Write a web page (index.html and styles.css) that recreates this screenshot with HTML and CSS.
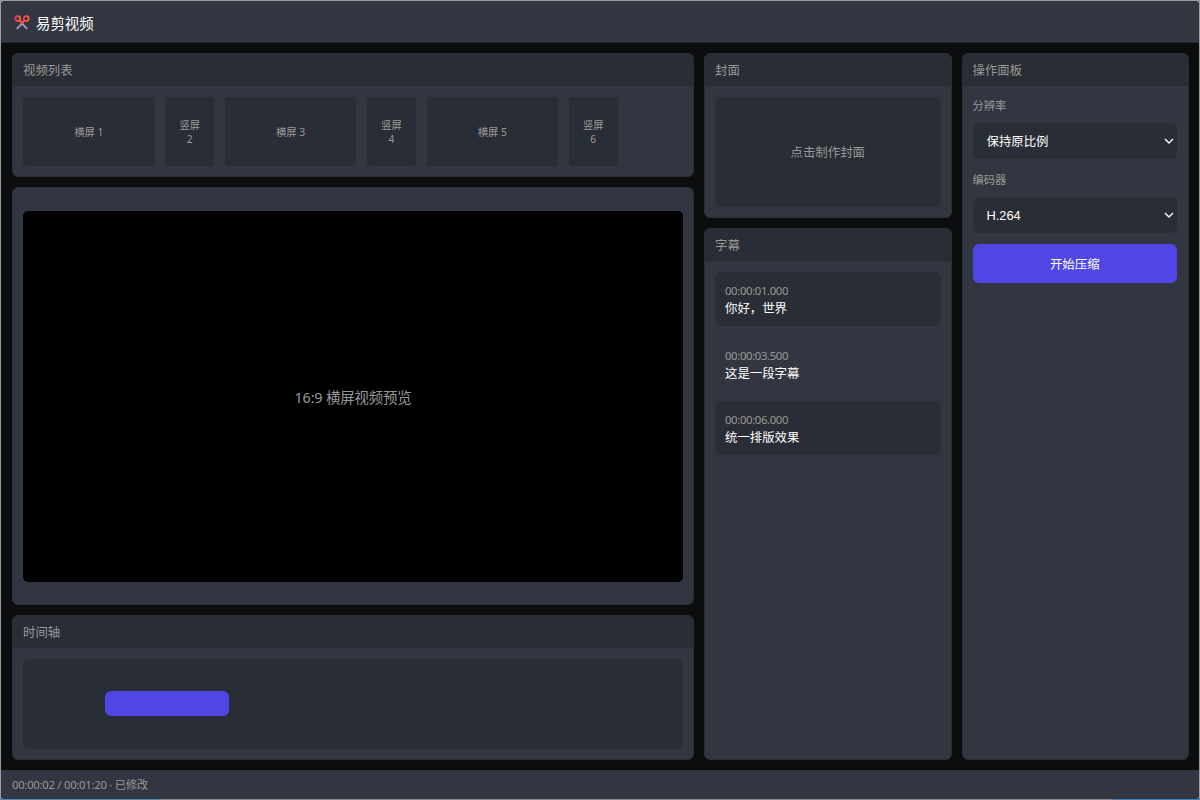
FILE: index.html
```
<!DOCTYPE html>
<html lang="zh-CN">
<head>
    <meta charset="UTF-8">
    <title>易剪视频</title>
    <link rel="stylesheet" href="styles.css">
</head>
<body>

<div class="app">
    <header class="topbar">
        <svg class="logo" viewBox="0 0 16 16" width="16" height="16" fill="none">
            <defs>
                <linearGradient id="ring" x1="0" y1="0" x2="1" y2="0">
                    <stop offset="0" stop-color="#f5316d"/>
                    <stop offset="1" stop-color="#ff6a2b"/>
                </linearGradient>
            </defs>
            <path d="M7 8.5 L13.2 14.8 M9 8.5 L2.8 14.8" stroke="#ac93c4" stroke-width="1.9"/>
            <path d="M5.5 6.3 L8 8.9 L10.5 6.3" stroke="#f8503f" stroke-width="2"/>
            <circle cx="3.8" cy="4.6" r="2.5" stroke="url(#ring)" stroke-width="1.7"/>
            <circle cx="12.2" cy="4.6" r="2.5" stroke="url(#ring)" stroke-width="1.7"/>
        </svg>
        <span class="title">易剪视频</span>
    </header>

    <main class="main">
        <div class="column">
            <section class="panel list-panel">
                <div class="panel-header">视频列表</div>
                <div class="video-list">
                    <div class="thumb">横屏 1</div>
                    <div class="thumb portrait">竖屏 2</div>
                    <div class="thumb">横屏 3</div>
                    <div class="thumb portrait">竖屏 4</div>
                    <div class="thumb">横屏 5</div>
                    <div class="thumb portrait">竖屏 6</div>
                </div>
            </section>
            <section class="panel preview-panel">
                <div class="preview">16:9 横屏视频预览</div>
            </section>
            <section class="panel timeline-panel">
                <div class="panel-header">时间轴</div>
                <div class="timeline">
                    <div class="clip"></div>
                </div>
            </section>
        </div>

        <div class="column">
            <section class="panel cover-panel">
                <div class="panel-header">封面</div>
                <div class="cover">点击制作封面</div>
            </section>
            <section class="panel subtitle-panel">
                <div class="panel-header">字幕</div>
                <div class="subtitles">
                    <div class="subtitle filled">
                        <div class="time">00:00:01.000</div>
                        <div class="text">你好，世界</div>
                    </div>
                    <div class="subtitle">
                        <div class="time">00:00:03.500</div>
                        <div class="text">这是一段字幕</div>
                    </div>
                    <div class="subtitle filled">
                        <div class="time">00:00:06.000</div>
                        <div class="text">统一排版效果</div>
                    </div>
                </div>
            </section>
        </div>

        <div class="column">
            <section class="panel action-panel">
                <div class="panel-header">操作面板</div>
                <div class="form">
                    <label for="ratio">分辨率</label>
                    <div class="select-box">
                        <select id="ratio">
                            <option>保持原比例</option>
                        </select>
                        <svg class="arrow" viewBox="0 0 10 6" width="10" height="6"><path d="M1 1 L5 5 L9 1"/></svg>
                    </div>
                    <label for="codec">编码器</label>
                    <div class="select-box">
                        <select id="codec">
                            <option>H.264</option>
                        </select>
                        <svg class="arrow" viewBox="0 0 10 6" width="10" height="6"><path d="M1 1 L5 5 L9 1"/></svg>
                    </div>
                    <button type="button">开始压缩</button>
                </div>
            </section>
        </div>
    </main>

    <footer class="statusbar">00:00:02 / 00:01:20 · 已修改</footer>
</div>

</body>
</html>
```
FILE: styles.css
```
* {
  box-sizing: border-box;
}
body {
  margin: 0;
  height: 800px;
  padding: 1px;
  overflow: hidden;
  font-family: "Noto Sans", "Noto Sans CJK SC", sans-serif;
  color: #fff;
  background: linear-gradient(to right, #5a8aae 0 161px, #85878b 161px 1112px, #4385b8 1112px) bottom / 100% 2px no-repeat #999b9c;
}
.app {
  height: 797.5px;
  display: flex;
  flex-direction: column;
  background: #0c0d0f;
  border-radius: 4px;
  overflow: hidden;
}
.topbar {
  height: 42px;
  flex-shrink: 0;
  display: flex;
  align-items: center;
  gap: 6px;
  padding: 1px 0 0 13px;
  background: #323640;
  border-bottom: 1px solid #24262a;
}
.title {
  font-size: 14.4px;
}
.main {
  height: 727px;
  flex-shrink: 0;
  display: grid;
  grid-template-columns: 682px 247.5px 227px;
  gap: 10px;
  padding: 10px 11px;
}
.column {
  display: flex;
  flex-direction: column;
  gap: 10px;
  height: 706.5px;
}
.panel {
  background: #323640;
  border: 1px solid #2c2e32;
  border-radius: 6px;
  overflow: hidden;
}
.panel-header {
  height: 32px;
  line-height: 33px;
  padding: 0 10px;
  font-size: 12.4px;
  color: #999;
  background: #292d35;
}
.list-panel {
  height: 124px;
}
.video-list {
  display: flex;
  gap: 10.3px;
  padding: 11px 10px;
}
.thumb {
  display: flex;
  align-items: center;
  justify-content: center;
  width: 131.7px;
  height: 68.5px;
  padding-top: 1px;
  font-size: 10.3px;
  line-height: 14px;
  text-align: center;
  color: #999;
  background: #292d35;
  border-radius: 3px;
}
.portrait {
  width: 49.5px;
  padding: 2px 12px 0;
}
.preview-panel {
  flex: 1;
  display: flex;
  align-items: center;
  padding: 0 10px;
}
.preview {
  width: 100%;
  height: 371px;
  display: flex;
  align-items: center;
  justify-content: center;
  font-size: 14.4px;
  letter-spacing: -0.15px;
  color: #999;
  background: #000;
  border-radius: 5px;
}
.timeline-panel {
  height: 144.5px;
}
.timeline {
  height: 90px;
  margin: 11px 10px;
  padding: 32px 0 0 82.4px;
  background: #292d35;
  border-radius: 6px;
}
.clip {
  width: 124px;
  height: 25px;
  background: #4f46e5;
  border-radius: 6px;
}
.cover-panel {
  height: 165px;
}
.cover {
  height: 110px;
  margin: 11px 10px;
  display: flex;
  align-items: center;
  justify-content: center;
  font-size: 12.4px;
  color: #999;
  background: #292d35;
  border-radius: 6px;
}
.subtitle-panel,
.action-panel {
  flex: 1;
}
.subtitles {
  display: flex;
  flex-direction: column;
  gap: 10.6px;
  padding: 11px 10px;
}
.subtitle {
  height: 54px;
  padding: 10px;
  border-radius: 6px;
}
.filled {
  background: #292d35;
}
.time {
  font-size: 11.3px;
  line-height: 17px;
  letter-spacing: -0.35px;
  color: #999;
}
.text {
  font-size: 12.4px;
  line-height: 19px;
}
.form {
  display: flex;
  flex-direction: column;
  padding: 10px 10.5px 0 10px;
}
label {
  height: 17px;
  margin-bottom: 10px;
  padding-top: 1px;
  font-size: 11.3px;
  line-height: 17px;
  color: #999;
}
.select-box {
  position: relative;
  height: 36px;
  margin-bottom: 11px;
}
select {
  display: block;
  appearance: none;
  width: 100%;
  height: 36px;
  padding: 1px 14px 0;
  font-family: "Liberation Sans", "Noto Sans CJK SC", sans-serif;
  font-size: 12.4px;
  color: #fff;
  background: #292d35;
  border: none;
  border-radius: 6px;
}
#codec {
  font-size: 12.8px;
}
.arrow {
  position: absolute;
  right: 3px;
  top: 15px;
  fill: none;
  stroke: #fff;
  stroke-width: 1.4;
}
button {
  height: 39px;
  padding-top: 2px;
  font-family: "Noto Sans", "Noto Sans CJK SC", sans-serif;
  font-size: 12.4px;
  color: #fff;
  background: #4f46e5;
  border: none;
  border-radius: 6px;
}
.statusbar {
  flex: 1;
  padding-left: 11px;
  font-size: 11.3px;
  line-height: 30px;
  letter-spacing: -0.27px;
  color: #999;
  background: #323640;
}
```
